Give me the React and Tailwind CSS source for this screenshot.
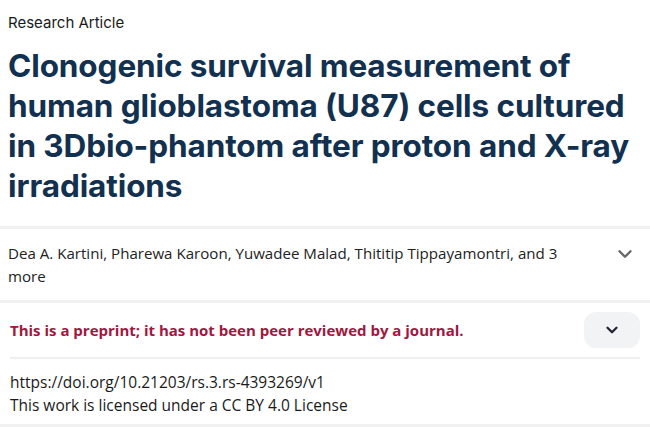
import React from "react";

function Chevron({ className, strokeWidth = 2.5 }) {
  return (
    <svg viewBox="0 0 24 24" className={className} fill="none" stroke="currentColor" strokeWidth={strokeWidth} strokeLinecap="round" strokeLinejoin="round">
      <path d="M6 9l6 6 6-6" />
    </svg>
  );
}

export default function App() {
  return (
    <div className="w-[650px] h-[427px] bg-white overflow-hidden" style={{ fontFamily: '"Open Sans", "Noto Sans", sans-serif' }}>
      <div className="pl-2 pr-3 pt-[13px]">
        <div className="text-[15px] leading-[20px] text-[#1a1a1a]" style={{ fontFamily: 'Inter, sans-serif' }}>Research Article</div>
        <h1 className="mt-[13px] text-[31.5px] leading-[40px] font-bold text-[#12304f] tracking-[-0.1px]" style={{ fontFamily: 'Inter, sans-serif' }}>
          Clonogenic survival measurement of human glioblastoma (U87) cells cultured in 3Dbio-phantom after proton and X-ray irradiations
        </h1>
      </div>
      <div className="mt-[20px] h-[3px] bg-[#f1f1f1]" />
      <div className="flex items-start pl-2 pr-[14px] pt-[13px] pb-[12px]">
        <div className="flex-1 text-[15.1px] leading-[23px] text-[#222] pr-[40px]">
          Dea A. Kartini, Pharewa Karoon, Yuwadee Malad, Thititip Tippayamontri, and 3 more
        </div>
        <Chevron className="w-[22px] h-[22px] text-[#666] mt-[1px]" strokeWidth={2.6} />
      </div>
      <div className="h-[3px] bg-[#f1f1f1]" />
      <div className="pl-[10px] pr-[10px]">
        <div className="flex items-center justify-between pt-[9px] pb-[9px]">
          <div className="text-[15px] font-bold text-[#a0173f]">This is a preprint; it has not been peer reviewed by a journal.</div>
          <div className="w-[56px] h-[36px] rounded-[12px] bg-[#f2f3f5] flex items-center justify-center">
            <Chevron className="w-[18px] h-[18px] text-[#1f2430]" strokeWidth={3} />
          </div>
        </div>
        <div className="h-[2px] bg-[#efefef]" />
        <div className="pt-[12px] text-[15.5px] leading-[23px] text-[#1a1a1a]">
          <div>https://doi.org/10.21203/rs.3.rs-4393269/v1</div>
          <div>This work is licensed under a CC BY 4.0 License</div>
        </div>
      </div>
      <div className="mt-[7px] h-[3px] bg-[#f1f1f1]" />
    </div>
  );
}
